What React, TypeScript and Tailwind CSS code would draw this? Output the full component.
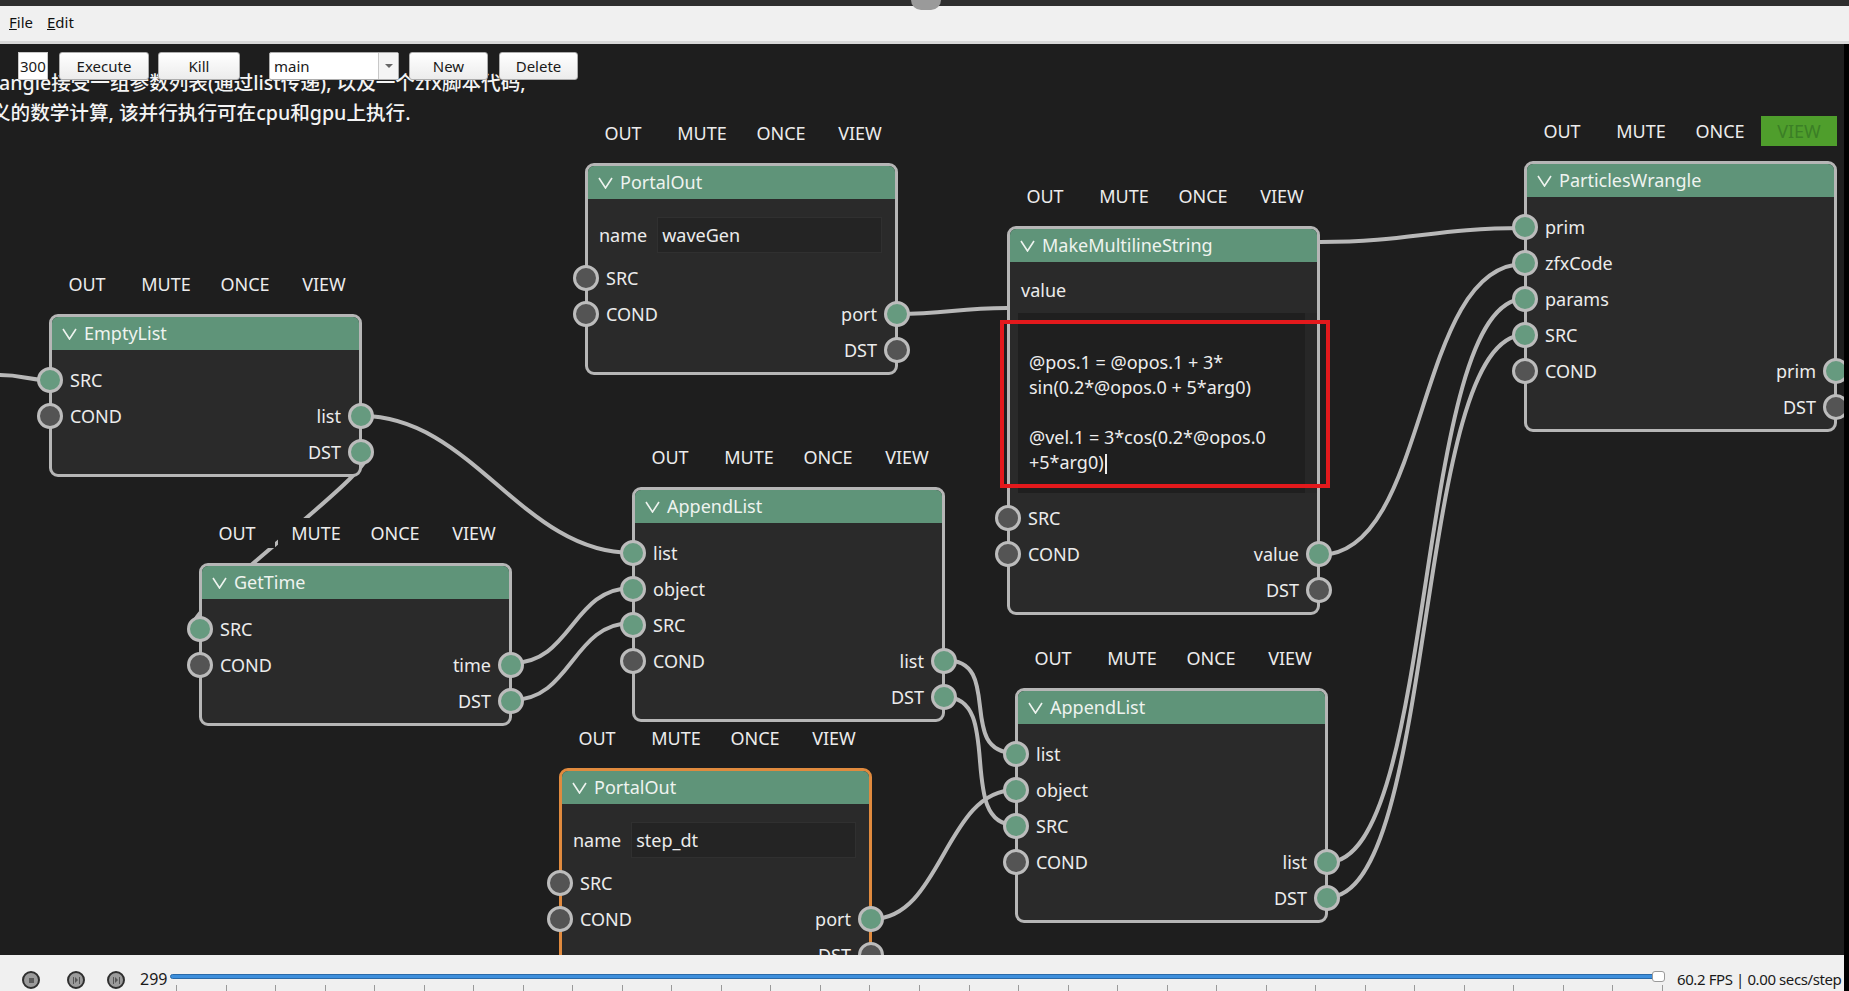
import React from "react";

type Port = { name: string; on: boolean };
type NodeData = {
  x: number;
  y: number;
  title: string;
  inputs: Port[];
  outputs: Port[];
  kind?: "portal" | "multiline";
  nameValue?: string;
  selected?: boolean;
  viewOn?: boolean;
};

// canvas starts below the menu bar
const TOP = 44;

const p = (name: string, on: boolean): Port => ({ name, on });

const nodes: NodeData[] = [
  { x: 49, y: 314, title: "EmptyList", inputs: [p("SRC", true), p("COND", false)], outputs: [p("list", true), p("DST", true)] },
  { x: 585, y: 163, title: "PortalOut", kind: "portal", nameValue: "waveGen", inputs: [p("SRC", false), p("COND", false)], outputs: [p("port", true), p("DST", false)] },
  { x: 1007, y: 226, title: "MakeMultilineString", kind: "multiline", inputs: [p("SRC", false), p("COND", false)], outputs: [p("value", true), p("DST", false)] },
  {
    x: 1524,
    y: 161,
    title: "ParticlesWrangle",
    viewOn: true,
    inputs: [p("prim", true), p("zfxCode", true), p("params", true), p("SRC", true), p("COND", false)],
    outputs: [p("prim", true), p("DST", false)],
  },
  { x: 199, y: 563, title: "GetTime", inputs: [p("SRC", true), p("COND", false)], outputs: [p("time", true), p("DST", true)] },
  { x: 632, y: 487, title: "AppendList", inputs: [p("list", true), p("object", true), p("SRC", true), p("COND", false)], outputs: [p("list", true), p("DST", true)] },
  { x: 1015, y: 688, title: "AppendList", inputs: [p("list", true), p("object", true), p("SRC", true), p("COND", false)], outputs: [p("list", true), p("DST", true)] },
  { x: 559, y: 768, title: "PortalOut", kind: "portal", nameValue: "step_dt", selected: true, inputs: [p("SRC", false), p("COND", false)], outputs: [p("port", true), p("DST", false)] },
];

const wires: { a: [number, number]; b: [number, number]; d: number }[] = [
  { a: [0, 375], b: [49, 380], d: 25 },
  { a: [362, 416], b: [632, 553], d: 110 },
  { a: [362, 452], b: [199, 628], d: 45 },
  { a: [512, 663], b: [632, 588], d: 60 },
  { a: [512, 700], b: [632, 623], d: 60 },
  { a: [897, 314], b: [1007, 308], d: 50 },
  { a: [1320, 242], b: [1524, 228], d: 90 },
  { a: [1320, 555], b: [1524, 264], d: 110 },
  { a: [945, 660], b: [1015, 753], d: 60 },
  { a: [945, 697], b: [1015, 825], d: 60 },
  { a: [872, 919], b: [1015, 790], d: 70 },
  { a: [1328, 862], b: [1524, 299], d: 110 },
  { a: [1328, 897], b: [1524, 335], d: 110 },
];

function Chevron() {
  return (
    <svg width="15" height="12" viewBox="0 0 15 12" className="shrink-0">
      <polyline points="1,1 7.5,11 14,1" fill="none" stroke="#eef3ef" strokeWidth="1.6" />
    </svg>
  );
}

function Socket({ on, right }: { on: boolean; right?: boolean }) {
  return (
    <span
      className={`absolute top-[5px] h-[26px] w-[26px] rounded-full border-[3px] border-[#bcbcbc] ${right ? "right-[-15px]" : "left-[-15px]"} ${on ? "bg-[#669a7f]" : "bg-[#545454]"}`}
    />
  );
}

function ButtonRow({ viewOn }: { viewOn?: boolean }) {
  return (
    <div className="grid h-[30px] w-[313px] grid-cols-4 gap-[3px]">
      {["OUT", "MUTE", "ONCE", "VIEW"].map((l) => {
        const active = viewOn && l === "VIEW";
        return (
          <div
            key={l}
            className={`flex items-center justify-center text-[18px] ${active ? "bg-[#4f9e2c] text-[#3b7f26]" : "bg-[#1e1e1e] text-[#ececec]"}`}
          >
            {l}
          </div>
        );
      })}
    </div>
  );
}

function GraphNode({ n }: { n: NodeData }) {
  const nIn = n.inputs.length;
  const rows = nIn + n.outputs.length - 1;
  return (
    <div className="absolute" style={{ left: n.x, top: n.y - TOP - 45 }}>
      <ButtonRow viewOn={n.viewOn} />
      <div
        className={`mt-[15px] w-[313px] rounded-[9px] border-[3px] bg-[#2a2a2a] text-[18px] text-[#ececec] ${n.selected ? "border-[#e08a3e]" : "border-[#b6b6b6]"}`}
      >
        <div className="flex h-[33px] items-center gap-[7px] rounded-t-[6px] bg-[#5f9479] pl-[10px] text-[#eef3ef]">
          <Chevron />
          <span>{n.title}</span>
        </div>
        <div className={n.kind ? "pb-[4px]" : "pt-[12px] pb-[4px]"}>
          {n.kind === "portal" && (
            <div className="pt-[17px] pb-[6px]">
              <div className="flex h-[38px] items-center gap-[10px] pl-[11px] pr-[13px]">
                <span>name</span>
                <div className="flex h-[36px] flex-1 items-center border border-[#303030] bg-[#242424] pl-[4px]">
                  {n.nameValue}
                </div>
              </div>
            </div>
          )}
          {n.kind === "multiline" && (
            <div className="pt-[10px] pb-[7px]">
              <div className="flex h-[36px] items-center pl-[11px]">value</div>
              <div className="ml-[8px] mt-[5px] flex h-[180px] bg-[#1f1f1f]">
                <div className="flex-1 pl-[11px] pt-[12px] leading-[25px] text-[#ededed]">
                  <div>&nbsp;</div>
                  <div>@pos.1 = @opos.1 + 3*</div>
                  <div>sin(0.2*@opos.0 + 5*arg0)</div>
                  <div>&nbsp;</div>
                  <div>@vel.1 = 3*cos(0.2*@opos.0</div>
                  <div>
                    +5*arg0)<span className="ml-[1px] inline-block h-[20px] w-[2px] bg-[#ededed] align-middle" />
                  </div>
                </div>
                <div className="w-[12px] bg-[#272727]" />
              </div>
            </div>
          )}
          {Array.from({ length: rows }).map((_, i) => {
            const inp = i < nIn ? n.inputs[i] : undefined;
            const out = i >= nIn - 1 ? n.outputs[i - (nIn - 1)] : undefined;
            return (
              <div key={i} className="relative flex h-[36px] items-center justify-between px-[18px]">
                {inp && <Socket on={inp.on} />}
                <span>{inp?.name}</span>
                <span>{out?.name}</span>
                {out && <Socket on={out.on} right />}
              </div>
            );
          })}
        </div>
      </div>
    </div>
  );
}

function ToolButton({ label, w }: { label: string; w: string }) {
  return (
    <div
      className={`flex h-[28px] items-center justify-center rounded-[3px] border border-[#adadad] bg-gradient-to-b from-white to-[#ececec] text-[15px] text-[#1a1a1a] ${w}`}
    >
      {label}
    </div>
  );
}

function RoundButton({ kind }: { kind: "stop" | "pause" | "step" }) {
  return (
    <div className="flex h-[18px] w-[18px] items-center justify-center rounded-full border-2 border-[#2f2f2f] bg-[#9b9b9b]">
      {kind === "stop" && <div className="h-[5px] w-[5px] bg-[#5a5a5a]" />}
      {kind !== "stop" && (
        <div className="flex h-[7px] items-center gap-[1px]">
          <div className="h-[7px] w-[1px] bg-[#555]" />
          <div className="h-0 w-0 border-y-[3px] border-l-[3px] border-y-transparent border-l-[#555]" />
          <div className="h-[7px] w-[1px] bg-[#555]" />
        </div>
      )}
    </div>
  );
}

export default function App() {
  return (
    <div className="flex h-[991px] w-[1849px] flex-col overflow-hidden bg-[#f0f0f0] font-['Noto_Sans','Noto_Sans_CJK_SC',sans-serif]">
      {/* window top edge */}
      <div className="relative h-[6px] bg-[#2e2e2e]">
        <div className="absolute left-[911px] top-0 h-[10px] w-[30px] rounded-b-full bg-[#9a9a9a]" />
      </div>

      {/* menu */}
      <div className="flex h-[38px] items-center gap-[14px] border-b-[3px] border-[#d8d8d8] bg-[#f0f0f0] pb-[2px] pl-[9px] text-[15px] text-[#111]">
        <span>
          <span className="underline">F</span>ile
        </span>
        <span>
          <span className="underline">E</span>dit
        </span>
      </div>

      {/* node canvas */}
      <div className="flex h-[911px]">
        <div className="relative flex-1 overflow-hidden bg-[#1e1e1e]">
          <div className="absolute left-0 top-[24px] whitespace-nowrap text-[19.6px] font-medium leading-[30px] text-[#f4f4f4]">
            <div className="ml-[-1px]">angle接受一组参数列表(通过list传递), 以及一个zfx脚本代码,</div>
            <div className="ml-[-9px]">义的数学计算, 该并行执行可在cpu和gpu上执行.</div>
          </div>

          <svg className="absolute inset-0" width="1844" height="911">
            {wires.map((w, i) => {
              const [x1, y1] = w.a;
              const [x2, y2] = w.b;
              const d = `M ${x1} ${y1 - TOP} C ${x1 + w.d} ${y1 - TOP}, ${x2 - w.d} ${y2 - TOP}, ${x2} ${y2 - TOP}`;
              return <path key={i} d={d} fill="none" stroke="#b8b8b8" strokeWidth="4" />;
            })}
          </svg>

          {nodes.map((n, i) => (
            <GraphNode key={i} n={n} />
          ))}

          {/* highlight box around the script */}
          <div className="absolute left-[1000px] top-[276px] h-[168px] w-[330px] border-[4px] border-[#e3191c]" />

          {/* toolbar */}
          <div className="absolute left-[18px] top-[8px] flex items-center">
            <div className="flex h-[28px] w-[30px] items-center border border-[#c8c8c8] bg-white pl-[1px] text-[15px] text-[#1a1a1a]">
              300
            </div>
            <div className="ml-[11px]">
              <ToolButton label="Execute" w="w-[90px]" />
            </div>
            <div className="ml-[9px]">
              <ToolButton label="Kill" w="w-[82px]" />
            </div>
            <div className="ml-[29px] flex h-[28px] w-[130px] items-center rounded-[2px] border border-[#adadad] bg-white text-[15px] text-[#1a1a1a]">
              <span className="flex-1 pl-[4px]">main</span>
              <div className="flex h-full w-[20px] items-center justify-center border-l border-[#c8c8c8] bg-[#f4f4f4]">
                <div className="h-0 w-0 border-x-[4px] border-t-[4px] border-x-transparent border-t-[#666]" />
              </div>
            </div>
            <div className="ml-[10px]">
              <ToolButton label="New" w="w-[79px]" />
            </div>
            <div className="ml-[11px]">
              <ToolButton label="Delete" w="w-[79px]" />
            </div>
          </div>
        </div>
        <div className="w-[5px] bg-black" />
      </div>

      {/* timeline */}
      <div className="flex h-[36px] items-start bg-[#f0f0f0]">
        <div className="flex flex-1 items-start">
          <div className="ml-[22px] mt-[16px]">
            <RoundButton kind="stop" />
          </div>
          <div className="ml-[27px] mt-[16px]">
            <RoundButton kind="pause" />
          </div>
          <div className="ml-[22px] mt-[16px]">
            <RoundButton kind="step" />
          </div>
          <div className="ml-[15px] mt-[14px] w-[30px] text-[16px] leading-[20px] text-[#1a1a1a]">299</div>
          <div className="relative mt-[19px] w-[1495px] shrink-0">
            <div className="h-[5px] w-[1488px] rounded-full border border-[#2a6aa8] bg-[#3d8fdc]" />
            <div className="ml-[6px] mt-[6px] flex w-[1487px] justify-between">
              {Array.from({ length: 31 }).map((_, i) => (
                <div key={i} className="h-[6px] w-[1px] bg-[#9a9a9a]" />
              ))}
            </div>
            <div className="absolute left-[1482px] top-[-3px] h-[11px] w-[13px] rounded-[3px] border border-[#9a9a9a] bg-white" />
          </div>
          <div className="ml-[12px] mt-[14px] whitespace-nowrap text-[15px] leading-[20px] tracking-[-0.4px] text-[#1a1a1a]">
            60.2 FPS | 0.00 secs/step
          </div>
        </div>
        <div className="h-full w-[5px] bg-black" />
      </div>
    </div>
  );
}
